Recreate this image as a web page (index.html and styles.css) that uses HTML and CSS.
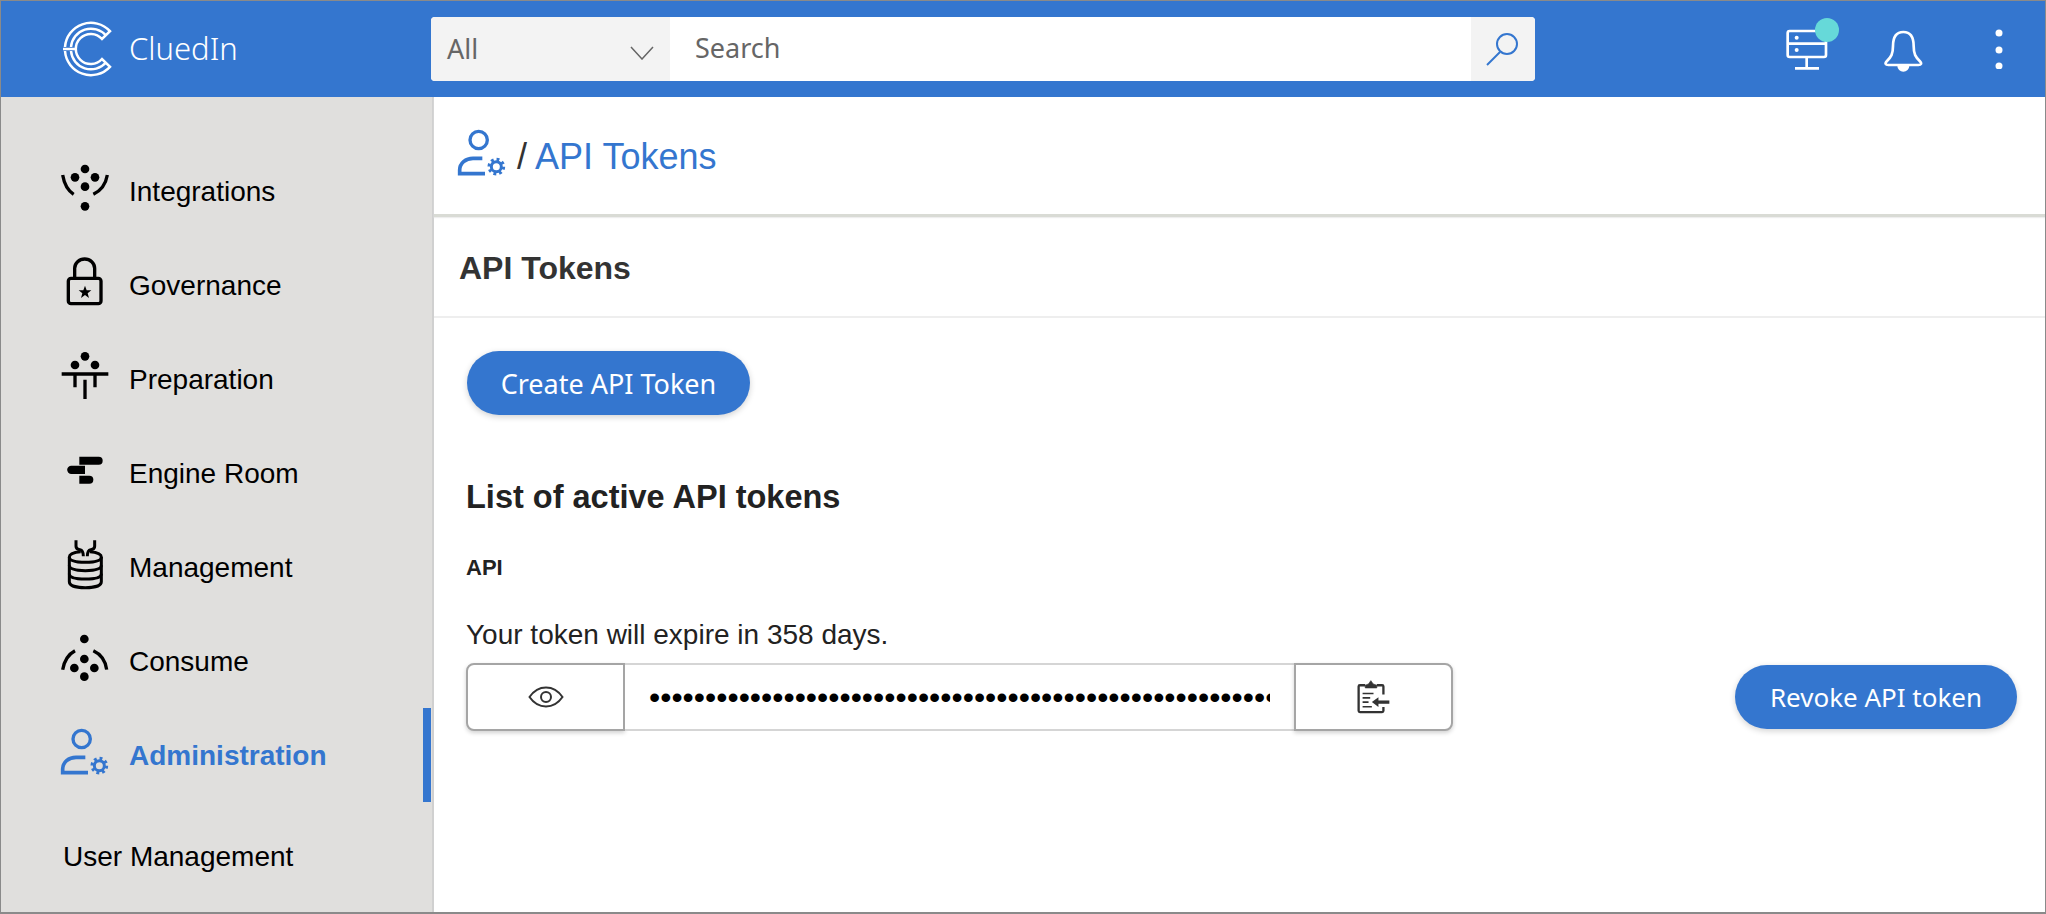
FILE: index.html
```html
<!DOCTYPE html>
<html lang="en">
<head>
    <meta charset="UTF-8">
    <meta name="viewport" content="width=device-width, initial-scale=1.0">
    <title>API Tokens - CluedIn</title>
    <link rel="stylesheet" href="styles.css">
</head>
<body>
    <svg class="icon-defs" width="0" height="0">
        <symbol id="icon-admin" viewBox="0 0 150 180">
            <circle cx="65" cy="42" r="26" fill="none" stroke="currentColor" stroke-width="10"/>
            <path d="M84 143H8V132C8 112 26 97 48 97H76" fill="none" stroke="currentColor" stroke-width="11"/>
            <circle cx="118" cy="122" r="15" fill="none" stroke="currentColor" stroke-width="9"/>
            <circle cx="118" cy="122" r="22" fill="none" stroke="currentColor" stroke-width="9" stroke-dasharray="8.600 8.680"/>
        </symbol>
    </svg>

    <div class="app">
        <header class="topbar">
            <div class="brand">
                <svg class="brand-logo" viewBox="0 0 50 56" fill="none" stroke="#fff" stroke-width="2.500">
                    <path d="M2 26A26 26 0 0 1 47 10.2L39 18A15 15 0 1 0 39 38L47 45.8A26 26 0 0 1 2 30"/>
                    <path d="M8 26A20 20 0 0 1 43 14.500M8 30A20 20 0 0 0 43 41.500"/>
                    <path d="M0 28H13"/>
                </svg>
                <span class="brand-name">CluedIn</span>
            </div>

            <div class="search">
                <div class="search-scope">
                    <span>All</span>
                    <svg class="chevron" viewBox="0 0 24 14" fill="none" stroke="#666" stroke-width="1.500">
                        <path d="M1 1L12 13L23 1"/>
                    </svg>
                </div>
                <div class="search-text">Search</div>
                <div class="search-btn">
                    <svg width="40" height="40" viewBox="0 0 40 40" fill="none" stroke="#3476cf" stroke-width="2">
                        <circle cx="24" cy="15" r="10"/>
                        <path d="M17 23L4 36"/>
                    </svg>
                </div>
            </div>

            <div class="topbar-icons">
                <div class="server">
                    <svg width="56" height="56" viewBox="0 0 168 168" fill="none" stroke="#fff" stroke-width="8">
                        <rect x="8" y="30" width="115" height="78" rx="6"/>
                        <path d="M8 68H123M65 108V142M30 142H102"/>
                        <circle cx="35" cy="50" r="6" fill="#fff" stroke="none"/>
                        <circle cx="35" cy="87" r="6" fill="#fff" stroke="none"/>
                    </svg>
                    <span class="server-badge"></span>
                </div>
                <svg class="bell" width="50" height="56" viewBox="0 0 150 168" fill="none" stroke="#fff" stroke-width="8">
                    <path d="M73 33C48 33 42 55 42 75C42 100 36 108 24 120C16 128 20 132 28 132H118C126 132 130 128 122 120C110 108 104 100 104 75C104 55 98 33 73 33Z"/>
                    <path d="M55 134A18 18 0 0 0 91 134Z" fill="#fff" stroke="none"/>
                </svg>
                <svg class="kebab" width="14" height="40" viewBox="0 0 14 40" fill="#fff">
                    <circle cx="7" cy="4" r="3.500"/>
                    <circle cx="7" cy="21" r="3.500"/>
                    <circle cx="7" cy="37" r="3.500"/>
                </svg>
            </div>
        </header>

        <div class="layout">
            <nav class="sidebar">
                <a class="nav-item">
                    <svg class="nav-icon" viewBox="0 0 150 180">
                        <circle cx="75" cy="24" r="13"/><circle cx="45" cy="49" r="13"/><circle cx="105" cy="49" r="13"/>
                        <circle cx="75" cy="77" r="13"/><circle cx="75" cy="136" r="13"/>
                        <path d="M8 42Q15 83 41 100M142 42Q135 83 100 100" fill="none" stroke="#000" stroke-width="10"/>
                    </svg>
                    <span class="nav-label">Integrations</span>
                </a>
                <a class="nav-item">
                    <svg class="nav-icon" viewBox="0 0 150 180">
                        <g fill="none" stroke="#000" stroke-width="10">
                            <rect x="25" y="70" width="98" height="76" rx="8"/>
                            <path d="M44 68V40A30 28 0 0 1 104 40V68"/>
                        </g>
                        <polygon points="75,92 80,106 94,106 83,115 87,129 75,120 63,129 67,115 56,106 70,106"/>
                    </svg>
                    <span class="nav-label">Governance</span>
                </a>
                <a class="nav-item">
                    <svg class="nav-icon" viewBox="0 0 150 180">
                        <circle cx="75" cy="22" r="13"/><circle cx="45" cy="48" r="13"/><circle cx="105" cy="48" r="13"/>
                        <path d="M5 75H145M45 75V115M105 75V115M75 92V150" fill="none" stroke="#000" stroke-width="10"/>
                    </svg>
                    <span class="nav-label">Preparation</span>
                </a>
                <a class="nav-item">
                    <svg class="nav-icon" viewBox="0 0 150 180">
                        <path d="M58 41H116A12 12 0 0 1 116 65H58Z"/>
                        <path d="M75 68V93H34A12.500 12.500 0 0 1 34 68Z"/>
                        <path d="M58 98H88A12 12 0 0 1 88 122H58Z"/>
                    </svg>
                    <span class="nav-label">Engine Room</span>
                </a>
                <a class="nav-item">
                    <svg class="nav-icon" viewBox="0 0 150 180" fill="none" stroke="#000" stroke-width="9">
                        <path d="M48 10V28Q48 38 60 38Q70 40 70 58M104 10V28Q104 38 92 38Q82 40 82 58"/>
                        <path d="M62 44C40 46 28 52 28 60V134C28 146 50 152 76 152C102 152 124 146 124 134V60C124 52 112 46 90 44"/>
                        <path d="M28 60C28 72 50 76 76 76C102 76 124 72 124 60M28 85C28 97 50 101 76 101C102 101 124 97 124 85M28 110C28 122 50 126 76 126C102 126 124 122 124 110"/>
                    </svg>
                    <span class="nav-label">Management</span>
                </a>
                <a class="nav-item">
                    <svg class="nav-icon" viewBox="0 0 150 180">
                        <circle cx="73" cy="24" r="13"/><circle cx="73" cy="84" r="13"/><circle cx="43" cy="111" r="13"/>
                        <circle cx="103" cy="111" r="13"/><circle cx="73" cy="137" r="13"/>
                        <path d="M8 116Q15 75 45 59M140 116Q135 75 100 59" fill="none" stroke="#000" stroke-width="10"/>
                    </svg>
                    <span class="nav-label">Consume</span>
                </a>
                <a class="nav-item nav-item-active">
                    <svg class="nav-icon"><use href="#icon-admin"/></svg>
                    <span class="nav-label">Administration</span>
                </a>
                <a class="nav-sub">User Management</a>
            </nav>

            <main class="main">
                <div class="breadcrumb">
                    <svg class="breadcrumb-icon"><use href="#icon-admin"/></svg>
                    <span class="breadcrumb-sep">/</span>
                    <span class="breadcrumb-page">API Tokens</span>
                </div>

                <h1 class="page-title">API Tokens</h1>

                <section class="page-body">
                    <button class="btn btn-create">Create API Token</button>
                    <h2 class="list-title">List of active API tokens</h2>
                    <h3 class="token-name">API</h3>
                    <p class="token-expiry">Your token will expire in 358 days.</p>

                    <div class="token-row">
                        <div class="token-field">
                            <button class="token-btn token-btn-left">
                                <svg width="36" height="22" viewBox="0 0 36 22" fill="none" stroke="#333" stroke-width="2">
                                    <path d="M1.500 11C6 4.500 11 1.500 18 1.500C25 1.500 30 4.500 34.500 11C30 17.500 25 20.500 18 20.500C11 20.500 6 17.500 1.500 11Z"/>
                                    <circle cx="18" cy="11" r="5"/>
                                </svg>
                            </button>
                            <input class="token-input" type="password" readonly value="aaaaaaaaaaaaaaaaaaaaaaaaaaaaaaaaaaaaaaaaaaaaaaaaaaaaaaaaaaaaaaaaaaaaaaaaaaaaaaaaaaaaaaaaaaaaaaaaaaaaaaaa">
                            <button class="token-btn token-btn-right">
                                <svg width="37" height="38" viewBox="0 0 110 115" fill="none" stroke="#333" stroke-width="7">
                                    <path d="M30 22H14Q10 22 10 26V99Q10 103 14 103H81Q85 103 85 99V88M85 50V26Q85 22 81 22H65"/>
                                    <path d="M30 30H65V22L54 18L47 8L40 18L30 22Z" fill="#333" stroke-width="2"/>
                                    <path d="M22 47H55M22 60H45M22 73H40M22 87H50" stroke-width="5"/>
                                    <path d="M103 73H62" stroke-width="10"/>
                                    <path d="M70 58L50 73L70 88Z" fill="#333" stroke="none"/>
                                </svg>
                            </button>
                        </div>
                        <button class="btn btn-revoke">Revoke API token</button>
                    </div>
                </section>
            </main>
        </div>
    </div>
</body>
</html>
```

FILE: styles.css
```css
body {
    margin: 0;
    font-family: "Liberation Sans", Arial, sans-serif;
    color: #000;
    background-color: #fff;
}

.icon-defs {
    position: absolute;
}

.app {
    box-sizing: border-box;
    height: 914px;
    border: 1px solid #8a8a8a;
    border-bottom-width: 2px;
    display: flex;
    flex-direction: column;
    overflow: hidden;
}

/* top bar */
.topbar {
    flex: none;
    height: 96px;
    display: flex;
    align-items: center;
    background-color: #3476cf;
}

.brand {
    width: 430px;
    flex: none;
    display: flex;
    align-items: center;
    box-sizing: border-box;
    padding-left: 62px;
}

.brand-logo {
    width: 50px;
    height: 56px;
    flex: none;
}

.brand-name {
    margin: 0 0 3px 16px;
    font-family: "Noto Sans", sans-serif;
    font-size: 31px;
    font-weight: 300;
    color: #fff;
}

.search {
    width: 1104px;
    height: 64px;
    flex: none;
    display: flex;
    background-color: #fff;
    border-radius: 4px;
    overflow: hidden;
    font-family: "Noto Sans", sans-serif;
    font-size: 27px;
    line-height: 62px;
}

.search-scope {
    width: 239px;
    box-sizing: border-box;
    padding: 0 16px;
    display: flex;
    align-items: center;
    justify-content: space-between;
    background-color: #f3f3f3;
    color: #666;
}

.chevron {
    width: 24px;
    height: 14px;
    margin-top: 8px;
}

.search-text {
    flex: 1;
    padding-left: 25px;
    color: #666;
}

.search-btn {
    width: 64px;
    display: flex;
    align-items: center;
    justify-content: center;
    background-color: #f3f3f3;
}

.topbar-icons {
    display: flex;
    align-items: center;
    padding-left: 250px;
}

.server {
    position: relative;
    height: 56px;
}

.server svg {
    display: block;
}

.server-badge {
    position: absolute;
    top: -3px;
    left: 30px;
    width: 24px;
    height: 24px;
    border-radius: 50%;
    background-color: #66d9d9;
}

.bell {
    margin-left: 38px;
}

.kebab {
    margin-left: 63px;
}

/* sidebar */
.layout {
    flex: 1;
    display: flex;
    min-height: 0;
}

.sidebar {
    width: 433px;
    flex: none;
    box-sizing: border-box;
    padding-top: 47px;
    background-color: #e0dfdd;
    border-right: 2px solid #d0d0d0;
}

.nav-item {
    height: 94px;
    display: flex;
    align-items: center;
    margin-right: 1px;
    padding-left: 59px;
    font-size: 28px;
}

.nav-icon {
    width: 50px;
    height: 60px;
    flex: none;
    margin-right: 19px;
    color: #000;
}

.nav-label {
    padding-top: 2px;
}

.nav-item-active {
    color: #3476cf;
    font-weight: bold;
    border-right: 8px solid #3476cf;
}

.nav-item-active .nav-icon {
    color: #3476cf;
}

.nav-sub {
    display: block;
    margin-top: 39px;
    padding-left: 62px;
    font-size: 28px;
    line-height: 32px;
}

/* main */
.main {
    flex: 1;
    min-width: 0;
}

.breadcrumb {
    height: 120px;
    box-sizing: border-box;
    display: flex;
    align-items: center;
    padding-left: 23px;
    border-bottom: 3px solid #d9dbd5;
    box-shadow: 0 1px 1px #eee;
}

.breadcrumb-icon {
    width: 50px;
    height: 60px;
    flex: none;
    color: #3476cf;
}

.breadcrumb-sep {
    margin-left: 10px;
    padding-top: 2px;
    font-size: 36px;
    color: #333;
}

.breadcrumb-page {
    margin-left: 8px;
    padding-top: 2px;
    font-size: 36px;
    color: #3476cf;
}

.page-title {
    margin: 0;
    height: 101px;
    box-sizing: border-box;
    padding: 2px 0 0 25px;
    line-height: 99px;
    font-size: 32px;
    font-weight: bold;
    color: #333;
    border-bottom: 2px solid #eee;
}

.page-body {
    padding: 33px 28px 0 32px;
}

.btn {
    display: block;
    width: 283px;
    height: 64px;
    padding: 0;
    border: none;
    border-radius: 32px;
    background-color: #3476cf;
    color: #fff;
    font-family: "Noto Sans", sans-serif;
    font-size: 27px;
    box-shadow: 0 2px 6px rgba(0, 0, 0, 0.18);
}

.btn-create {
    margin-left: 1px;
}

.list-title {
    margin: 63px 0 0;
    font-size: 32.500px;
    line-height: 38px;
    color: #222;
}

.token-name {
    margin: 39px 0 0;
    font-size: 22px;
    line-height: 26px;
    color: #222;
}

.token-expiry {
    margin: 37px 0 0;
    font-size: 28px;
    line-height: 34px;
    color: #222;
}

.token-row {
    display: flex;
    align-items: center;
    justify-content: space-between;
    margin-top: 11px;
}

.token-field {
    display: flex;
    height: 68px;
}

.token-btn {
    width: 159px;
    padding: 0;
    display: flex;
    align-items: center;
    justify-content: center;
    background-color: #fff;
    border: 2px solid #a5a5a5;
    box-shadow: 0 2px 4px rgba(0, 0, 0, 0.18);
}

.token-btn-left {
    border-radius: 8px 0 0 8px;
}

.token-btn-right {
    border-radius: 0 8px 8px 0;
}

.token-input {
    width: 669px;
    box-sizing: border-box;
    padding: 0 24px;
    border: none;
    border-top: 2px solid #d5d5d5;
    border-bottom: 2px solid #d5d5d5;
    outline: none;
    font-family: "Liberation Sans", Arial, sans-serif;
    font-size: 32px;
    color: #000;
}

.btn-revoke {
    width: 282px;
    font-size: 26px;
}
```
